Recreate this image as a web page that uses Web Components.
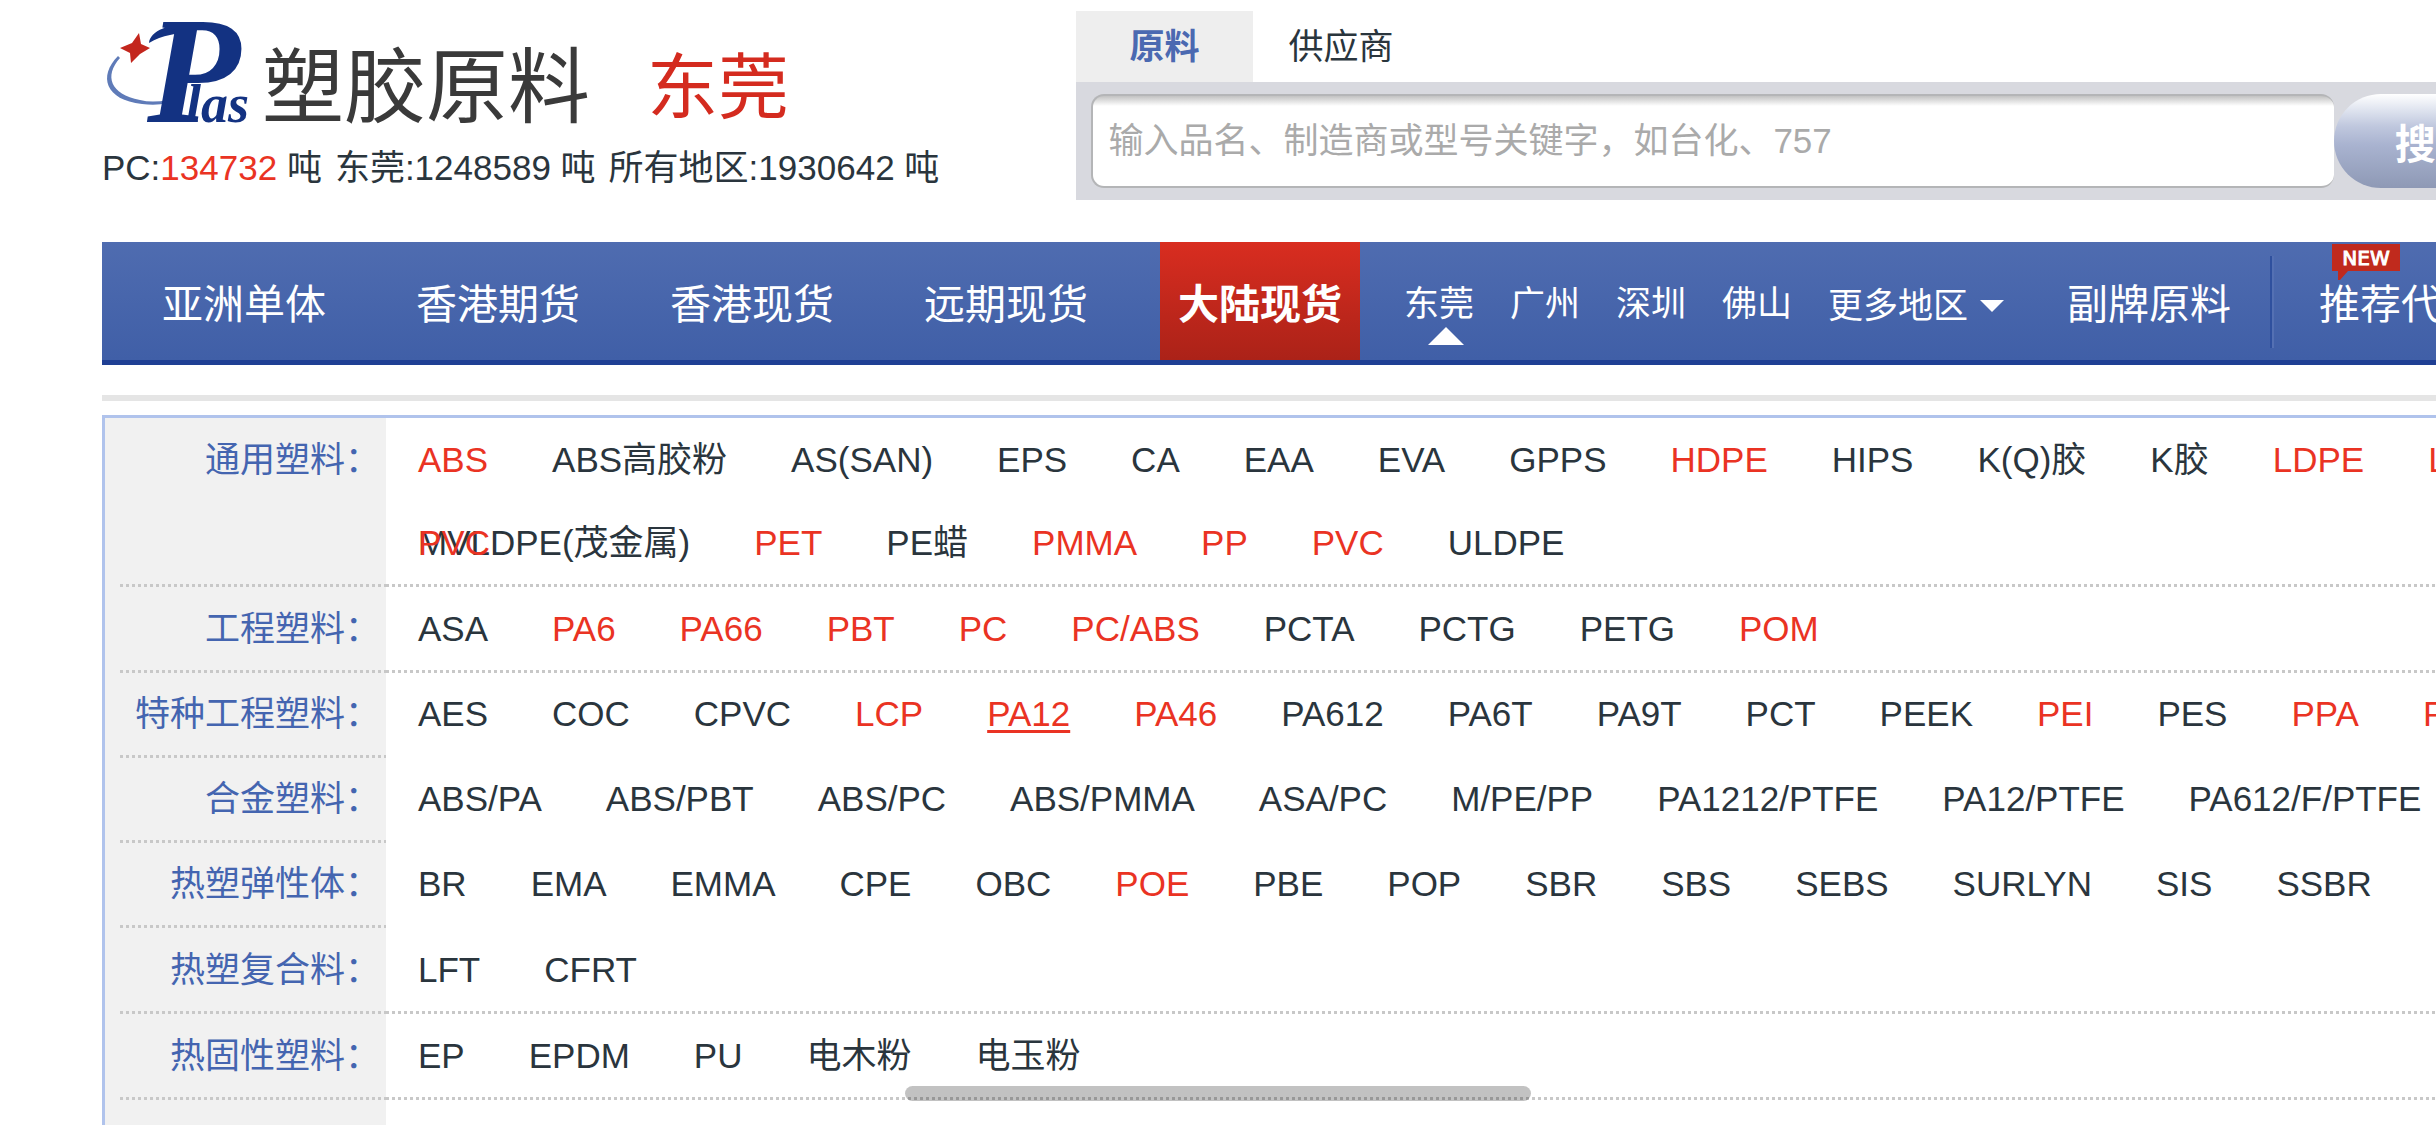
<!DOCTYPE html>
<html lang="zh-CN">
<head>
<meta charset="utf-8">
<title>塑胶原料 东莞</title>
<style>
    body {
        margin: 0;
        overflow: hidden;
        background: #fff;
        color: #2a353d;
        font-family: "Liberation Sans", "Noto Sans CJK SC", sans-serif;
        font-size: 35px;
    }
</style>
</head>
<body>
<plas-page></plas-page>

<script>
const RED = new Set([
    'ABS', 'HDPE', 'LDPE', 'LLDPE', 'PET', 'PMMA', 'PP', 'PVC',
    'PA6', 'PA66', 'PBT', 'PC', 'PC/ABS', 'POM',
    'LCP', 'PA12', 'PA46', 'PEI', 'PPA', 'PPS', 'POE',
]);

const CATEGORIES = [
    {
        label: '通用塑料', divided: true, stray: 'PVC',
        lines: [
            ['ABS', 'ABS高胶粉', 'AS(SAN)', 'EPS', 'CA', 'EAA', 'EVA', 'GPPS', 'HDPE', 'HIPS', 'K(Q)胶', 'K胶', 'LDPE', 'LLDPE'],
            ['MVLDPE(茂金属)', 'PET', 'PE蜡', 'PMMA', 'PP', 'PVC', 'ULDPE'],
        ],
    },
    {
        label: '工程塑料', divided: true,
        lines: [['ASA', 'PA6', 'PA66', 'PBT', 'PC', 'PC/ABS', 'PCTA', 'PCTG', 'PETG', 'POM']],
    },
    {
        label: '特种工程塑料', current: 'PA12',
        lines: [['AES', 'COC', 'CPVC', 'LCP', 'PA12', 'PA46', 'PA612', 'PA6T', 'PA9T', 'PCT', 'PEEK', 'PEI', 'PES', 'PPA', 'PPS']],
    },
    {
        label: '合金塑料',
        lines: [['ABS/PA', 'ABS/PBT', 'ABS/PC', 'ABS/PMMA', 'ASA/PC', 'M/PE/PP', 'PA1212/PTFE', 'PA12/PTFE', 'PA612/F/PTFE']],
    },
    {
        label: '热塑弹性体',
        lines: [['BR', 'EMA', 'EMMA', 'CPE', 'OBC', 'POE', 'PBE', 'POP', 'SBR', 'SBS', 'SEBS', 'SURLYN', 'SIS', 'SSBR']],
    },
    { label: '热塑复合料', divided: true, lines: [['LFT', 'CFRT']] },
    { label: '热固性塑料', divided: true, lines: [['EP', 'EPDM', 'PU', '电木粉', '电玉粉']] },
];

class PlasLogo extends HTMLElement {
    constructor() {
        super();
        this.attachShadow({mode: 'open'}).innerHTML = `
          <style>
            :host { display: flex; align-items: center; }
            svg { flex: none; width: 160px; height: 128px; overflow: visible; }
            text { font-family: "Liberation Serif", serif; font-style: italic; font-weight: bold; fill: #133282; }
            span { font-size: 82px; line-height: 82px; color: #3a3a3a; white-space: nowrap; }
          </style>
          <svg viewBox="0 0 160 128" aria-hidden="true">
            <path d="M16 32C-4 52 3 76 40 80Q54 82 66 79L66 76Q50 79 38 76C8 70 2 52 18 34Z" fill="#5f7bb8"/>
            <path d="M37 9L39 20L48 24L38 30L29 39L28 29L18 24L30 19Z" fill="#c3261d"/>
            <path d="M47 19C48 7 67 -1 96 -2L92 8C75 9 60 11 47 19Z" fill="#133282"/>
            <text x="45" y="98" font-size="153">P</text>
            <text x="84" y="98" font-size="54">las</text>
          </svg>
          <span>塑胶原料</span>
        `;
    }
}

class SiteBrand extends HTMLElement {
    constructor() {
        super();
        this.attachShadow({mode: 'open'}).innerHTML = `
          <style>
            :host { display: block; padding-top: 13px; white-space: nowrap; }
            .top { display: flex; align-items: center; gap: 57px; }
            .city { font-size: 71px; line-height: 82px; color: #d42b1f; }
            .stats { display: flex; gap: 13px; line-height: 32px; }
            .stats b { font-weight: normal; color: #ea3323; }
          </style>
          <div class="top">
            <plas-logo></plas-logo>
            <div class="city">东莞</div>
          </div>
          <div class="stats">
            <span>PC:<b>134732</b> 吨</span>
            <span>东莞:1248589 吨</span>
            <span>所有地区:1930642 吨</span>
          </div>
        `;
    }
}

class SearchPanel extends HTMLElement {
    constructor() {
        super();
        this.attachShadow({mode: 'open'}).innerHTML = `
          <style>
            :host { display: block; }
            button { margin: 0; border: 0; font: inherit; white-space: nowrap; cursor: pointer; }
            .tabs { display: flex; }
            .tabs button { padding: 0 35px; line-height: 71px; background: none; color: inherit; }
            .tabs .on { padding: 0 54px 0 53px; background: #eee; color: #4b69b1; font-weight: bold; }
            form { display: flex; margin: 0; padding: 12px 0 12px 15px; background: #d8d9df; }
            input {
                box-sizing: border-box;
                flex: 0 0 51vw;
                height: 94px;
                padding: 0 15px;
                border: 2px solid #b4b5b7;
                border-right-width: 0;
                border-radius: 13px;
                background: linear-gradient(#c2c2c2, #fff 10px);
                color: inherit;
                font: inherit;
            }
            input::placeholder { color: #aaa; opacity: 1; }
            .go {
                flex: none;
                padding: 0 61px;
                border-radius: 47px;
                background: linear-gradient(#fff, #dde2ee 18%, #c0c8de 34%, #a9b3d0 54%, #8e99b5);
                color: #fff;
                font-size: 41px;
                font-weight: bold;
            }
          </style>
          <div class="tabs">
            <button type="button" class="on">原料</button>
            <button type="button">供应商</button>
          </div>
          <form>
            <input type="text" aria-label="搜索" placeholder="输入品名、制造商或型号关键字，如台化、757">
            <button type="button" class="go">搜索</button>
          </form>
        `;
    }
}

class NavItem extends HTMLElement {
    constructor() {
        super();
        this.attachShadow({mode: 'open'}).innerHTML = `
          <style>
            :host { display: block; position: relative; flex: none; font-size: 41px; }
            a {
                display: block;
                padding: 8px 18px 0;
                line-height: 110px;
                color: #fff;
                text-decoration: none;
                white-space: nowrap;
            }
            :host([active]) a { background: linear-gradient(#d92d20, #ab2218); font-weight: bold; }
            :host([small]) { font-size: 35px; }
            :host([small]) a { padding: 7px 0 0; }
            :host([more]) a { display: flex; align-items: center; gap: 12px; padding-top: 10px; line-height: 108px; }
            :host([more]) a::after {
                content: "";
                border: 12px solid transparent;
                border-top-color: #fff;
                border-bottom: 0;
            }
            :host([current])::after {
                content: "";
                position: absolute;
                left: 24px;
                top: 85px;
                border: 18px solid transparent;
                border-bottom-color: #fff;
                border-top: 0;
            }
            .badge { position: absolute; left: 31px; top: 2px; width: 68px; height: 36px; }
          </style>
          <a href="#"><slot></slot></a>
          ${this.hasAttribute('new') ? `
          <svg class="badge" viewBox="0 0 68 36">
            <path d="M0 0H68V27H16L8 36H6V27H0Z" fill="#c02a1d"/>
            <text x="34" y="21" text-anchor="middle" fill="#fff" stroke="#fff" font-family="DejaVu Sans, sans-serif" font-size="20">NEW</text>
          </svg>` : ''}
        `;
    }
}

class MainNav extends HTMLElement {
    constructor() {
        super();
        this.attachShadow({mode: 'open'}).innerHTML = `
          <style>
            :host {
                display: flex;
                padding-left: 42px;
                background: linear-gradient(#4f6cb0, #405fa7);
                background-clip: padding-box;
                border-bottom: 5px solid #1f3f94;
            }
            .main { display: flex; flex: none; gap: 54px; }
            .areas { display: flex; flex: none; gap: 36px; padding: 0 45px 0 44px; }
            .rule {
                flex: none;
                box-sizing: border-box;
                width: 4px;
                margin: 14px 27px 12px 21px;
                background: #2f509e;
                border-right: 2px solid #5470b3;
            }
          </style>
          <div class="main">
            <nav-item>亚洲单体</nav-item>
            <nav-item>香港期货</nav-item>
            <nav-item>香港现货</nav-item>
            <nav-item>远期现货</nav-item>
            <nav-item active>大陆现货</nav-item>
          </div>
          <div class="areas">
            <nav-item small current>东莞</nav-item>
            <nav-item small>广州</nav-item>
            <nav-item small>深圳</nav-item>
            <nav-item small>佛山</nav-item>
            <nav-item small more>更多地区</nav-item>
          </div>
          <nav-item>副牌原料</nav-item>
          <div class="rule"></div>
          <nav-item new>推荐代理</nav-item>
        `;
    }
}

class CategoryRow extends HTMLElement {
    set data(row) {
        const root = this.shadowRoot || this.attachShadow({mode: 'open'});
        root.innerHTML = `
          <style>
            :host { display: flex; line-height: ${row.divided ? 83 : 82}px; white-space: nowrap; }
            .label, .items {
                padding-bottom: 3px;
                background: repeating-linear-gradient(90deg, #c8c8c8 0 3px, transparent 3px 6px) left bottom / 100% 3px no-repeat;
            }
            .label { box-sizing: border-box; flex: none; width: 266px; padding-right: 6px; text-align: right; color: #4465b0; }
            .items { position: relative; flex: 1; min-width: 0; padding-left: 32px; }
            .items.plain { background: none; }
            .line { display: flex; gap: 64px; }
            a { flex: none; color: inherit; text-decoration: none; }
            a.red { color: #ea3323; }
            a.current { text-decoration: underline; text-decoration-thickness: 3px; text-underline-offset: 4px; }
            /* entry that falls on top of the second line */
            .stray { position: absolute; left: 32px; bottom: 3px; }
          </style>
          <div class="label">${row.label}：</div>
          <div class="items ${row.divided ? '' : 'plain'}">
            ${row.lines.map(line => `<div class="line">${line.map(name => this.link(name, row)).join('')}</div>`).join('')}
            ${row.stray ? `<a class="red stray" href="#">${row.stray}</a>` : ''}
          </div>
        `;
    }

    link(name, row) {
        const cls = [RED.has(name) ? 'red' : '', row.current === name ? 'current' : ''].join(' ').trim();
        return `<a href="#" class="${cls}">${name}</a>`;
    }
}

class CategoryList extends HTMLElement {
    constructor() {
        super();
        this.attachShadow({mode: 'open'}).innerHTML = `
          <style>
            :host {
                display: block;
                min-height: 900px;
                padding-left: 15px;
                border: solid #b0c3ec;
                border-width: 3px 0 0 3px;
                background: linear-gradient(#f1f1f1, #f1f1f1) left top / 281px 100% no-repeat;
            }
          </style>
        `;
        for (const row of CATEGORIES) {
            const el = document.createElement('category-row');
            el.data = row;
            this.shadowRoot.append(el);
        }
    }
}

class PlasPage extends HTMLElement {
    constructor() {
        super();
        this.attachShadow({mode: 'open'}).innerHTML = `
          <style>
            :host { display: block; height: 100vh; overflow: hidden; box-sizing: border-box; padding: 11px 0 0 102px; }
            header { display: flex; }
            site-brand { flex: 0 0 40vw; }
            search-panel { flex: 1; min-width: 0; }
            main-nav { margin-top: 42px; }
            hr { height: 6px; margin: 30px 0 14px; border: 0; background: #e5e5e5; }
            .thumb {
                position: fixed;
                left: 37.15vw;
                bottom: 24px;
                width: 626px;
                height: 15px;
                border-radius: 8px;
                background: rgba(0, 0, 0, .24);
            }
          </style>
          <header>
            <site-brand></site-brand>
            <search-panel></search-panel>
          </header>
          <main-nav></main-nav>
          <hr>
          <category-list></category-list>
          <div class="thumb"></div>
        `;
    }
}

customElements.define('plas-logo', PlasLogo);
customElements.define('site-brand', SiteBrand);
customElements.define('search-panel', SearchPanel);
customElements.define('nav-item', NavItem);
customElements.define('main-nav', MainNav);
customElements.define('category-row', CategoryRow);
customElements.define('category-list', CategoryList);
customElements.define('plas-page', PlasPage);
</script>
</body>
</html>
